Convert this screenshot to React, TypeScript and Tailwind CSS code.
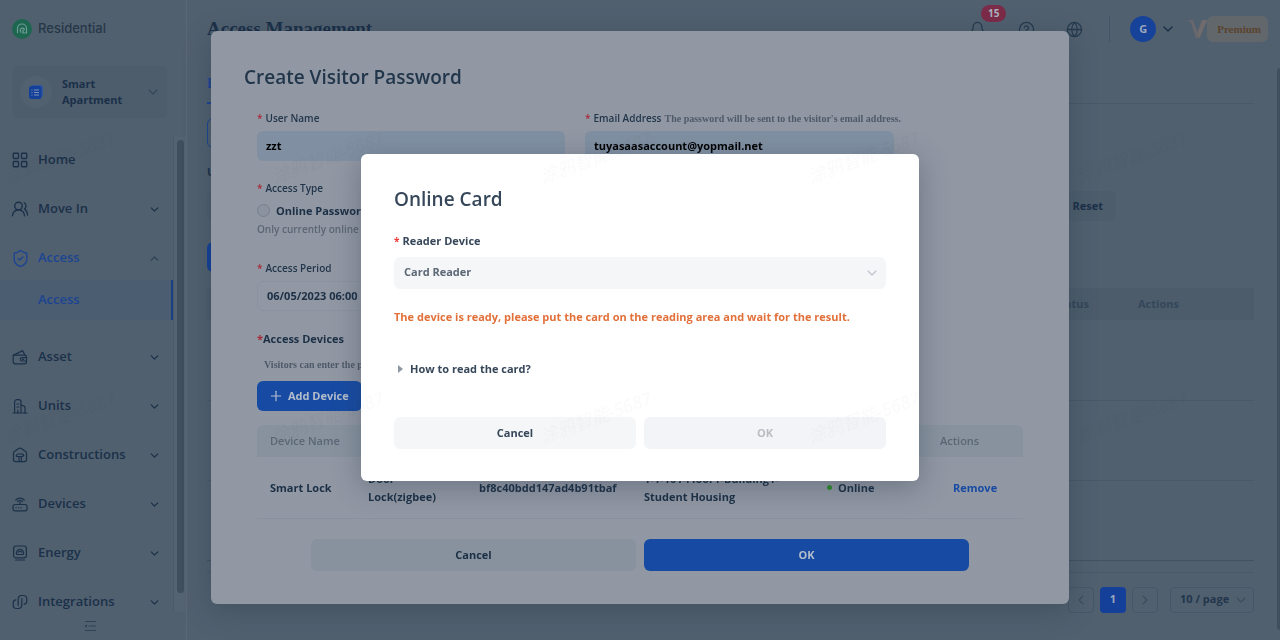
import React from 'react';
import {
    Bell,
    CircleQuestionMark,
    ChevronDown,
    ChevronLeft,
    ChevronRight,
    ChevronUp,
    Globe,
    LayoutGrid,
    Plus,
    ShieldCheck,
    UsersRound,
} from 'lucide-react';

const WalletIcon = () => (
    <svg width="16" height="16" viewBox="0 0 16 16" fill="none" stroke="currentColor" strokeWidth="1.2" strokeLinejoin="round">
        <path d="M1.2 6.2h11.3a2 2 0 0 1 2 2v4.6a2 2 0 0 1-2 2H3.2a2 2 0 0 1-2-2z" />
        <path d="M1.2 6.4 10.6 1.6 13 6.2" />
        <path d="M14.5 8.6H10a1.7 1.7 0 0 0 0 3.4h4.5" />
        <path d="M10 10.3h2" />
    </svg>
);

const UnitsIcon = () => (
    <svg width="16" height="16" viewBox="0 0 16 16" fill="none" stroke="currentColor" strokeWidth="1.2" strokeLinecap="round">
        <path d="M1 15h14M2.6 15V4a2.4 2.4 0 0 1 2.4-2.4h1.6A2.4 2.4 0 0 1 9 4v11" />
        <path d="M9 7l2.6.8a1.8 1.8 0 0 1 1.4 1.8V15M4.9 6h2M4.9 9h2M5.8 12v3" />
    </svg>
);

const ConstructionsIcon = () => (
    <svg width="16" height="16" viewBox="0 0 16 16" fill="none" stroke="currentColor" strokeWidth="1.2" strokeLinejoin="round">
        <path d="M6.7 1.6 2.4 4.5a2 2 0 0 0-.9 1.7v6.4a2 2 0 0 0 2 2h9a2 2 0 0 0 2-2V6.2a2 2 0 0 0-.9-1.7L9.3 1.6a2.3 2.3 0 0 0-2.6 0z" />
        <path d="M4.3 9.8V9a2 2 0 0 1 2-2h4.2l1.3 1.2-1.3 1.3H4.3M7 9.5v5M9.3 9.5v5" />
    </svg>
);

const DevicesIcon = () => (
    <svg width="16" height="16" viewBox="0 0 16 16" fill="none" stroke="currentColor" strokeWidth="1.2" strokeLinecap="round">
        <rect x="1" y="8.5" width="14" height="6.3" rx="2" />
        <path d="M8 8.5V5.8M3.8 4a5.6 5.6 0 0 1 8.4 0M5.7 5.5a3.2 3.2 0 0 1 4.6 0M4 11.7h.1M6.5 11.7h.1M9 11.7h.1" />
    </svg>
);

const EnergyIcon = () => (
    <svg width="16" height="16" viewBox="0 0 16 16" fill="none" stroke="currentColor" strokeWidth="1.2" strokeLinecap="round">
        <rect x="1.6" y="1" width="12.8" height="11.8" rx="2.4" />
        <path d="M4.7 9.5h6.6a3.6 3.6 0 1 0-6.6 0zM6.3 7.2a2 2 0 0 1 3.4 0M3.5 15h9" />
    </svg>
);

const IntegrationsIcon = () => (
    <svg width="16" height="16" viewBox="0 0 16 16" fill="none" stroke="currentColor" strokeWidth="1.2" strokeLinecap="round">
        <path d="M9.8 4.5v6.7a3.2 3.2 0 0 1-3.2 3.3H4.2a3 3 0 0 1-3-3V8.8a3 3 0 0 1 2.6-3" />
        <path d="M6.2 11.5V4.8a3.2 3.2 0 0 1 3.2-3.3h2.4a3 3 0 0 1 3 3v2.7a3 3 0 0 1-2.6 3" />
    </svg>
);

const CollapseIcon = () => (
    <svg width="13" height="12" viewBox="0 0 13 12" fill="none" stroke="currentColor" strokeWidth="1">
        <path d="M1 1.5h11M4.5 6H12M1 10.5h11" />
        <path d="M0.5 6 3 4.2v3.6z" fill="currentColor" stroke="none" />
    </svg>
);

interface MenuItem {
    label: string;
    icon: React.ReactNode;
    expandable?: boolean;
}

const TOP_ITEMS: MenuItem[] = [
    { label: 'Home', icon: <LayoutGrid size={18} strokeWidth={1.8} className="shrink-0" /> },
    { label: 'Move In', icon: <UsersRound size={18} strokeWidth={1.8} className="shrink-0" />, expandable: true },
];

const BOTTOM_ITEMS: MenuItem[] = [
    { label: 'Asset', icon: <WalletIcon />, expandable: true },
    { label: 'Units', icon: <UnitsIcon />, expandable: true },
    { label: 'Constructions', icon: <ConstructionsIcon />, expandable: true },
    { label: 'Devices', icon: <DevicesIcon />, expandable: true },
    { label: 'Energy', icon: <EnergyIcon />, expandable: true },
    { label: 'Integrations', icon: <IntegrationsIcon />, expandable: true },
];

const MenuRow: React.FC<{ item: MenuItem }> = ({ item }) => (
    <li>
        <a href="#" className="flex h-10 items-center gap-[10px] pl-3 pr-3 text-[13px] font-semibold text-[#1b3049]">
            <span className="flex w-4 items-center justify-center">{item.icon}</span>
            <span className="flex-1">{item.label}</span>
            {item.expandable && <ChevronDown size={13} strokeWidth={2.2} />}
        </a>
    </li>
);

const Sidebar = () => (
    <aside className="flex w-[187px] shrink-0 flex-col border-r border-[#5a6876]">
        <div className="flex h-[58px] shrink-0 items-center gap-[6px] pl-3">
            <svg width="20" height="20" viewBox="0 0 20 20" fill="none">
                <circle cx="10" cy="10" r="10" fill="#1d6650" />
                <path d="M5.5 14V9.3A4.5 4.5 0 0 1 10 5a4.5 4.5 0 0 1 4.5 4.5V14H11v-3" stroke="#6f9c94" strokeWidth="1.2" />
                <path d="M9.5 13.5A2.3 2.3 0 1 1 12.3 10c0 .9-.5 1.5-1.3 1.5" stroke="#6f9c94" strokeWidth="1.2" />
            </svg>
            <span className="font-['Inter',sans-serif] text-[13px] font-medium text-[#263747]">Residential</span>
        </div>
        <button className="ml-3 mr-[19px] mt-2 flex h-[52px] shrink-0 items-center rounded-md bg-[#4d5d6c] pl-2 pr-[6px] text-left text-[11px] font-bold leading-4 text-[#1b3049]">
            <span className="flex size-8 items-center justify-center rounded-full bg-[#52616f]">
                <svg width="14" height="14" viewBox="0 0 14 14">
                    <rect x="2" y="0" width="12" height="12" rx="2.5" fill="#2f56a0" />
                    <rect x="0" y="1" width="12.5" height="13" rx="2.5" fill="#15409a" />
                    <path d="M2.5 5h1M5 5h5M2.5 7.5h1M5 7.5h5M2.5 10h1M5 10h5" stroke="#7f93b8" strokeWidth="1.2" />
                </svg>
            </span>
            <span className="ml-[10px] flex-1">
                Smart
                <br />
                Apartment
            </span>
            <ChevronDown size={16} strokeWidth={1.6} className="text-[#33475a]" />
        </button>
        <div className="mt-[19px] flex min-h-0 flex-1 overflow-hidden">
            <nav className="flex-1">
                <ul className="flex flex-col gap-[9px] pt-[3px]">
                    {TOP_ITEMS.map((item) => (
                        <MenuRow key={item.label} item={item} />
                    ))}
                    <li>
                        <a href="#" className="flex h-10 items-center gap-[10px] pl-3 pr-3 text-[13px] font-semibold text-[#1c4493]">
                            <span className="flex w-4 items-center justify-center">
                                <ShieldCheck size={19} strokeWidth={1.7} className="shrink-0" />
                            </span>
                            <span className="flex-1">Access</span>
                            <ChevronUp size={13} strokeWidth={2.2} className="text-[#2c4054]" />
                        </a>
                        <a href="#" className="mb-2 mt-[2px] flex h-10 items-center border-r-2 border-[#1a3f82] bg-[#4b5d71] pl-[38px] text-[13px] font-semibold text-[#1c4493]">
                            Access
                        </a>
                    </li>
                    {BOTTOM_ITEMS.map((item) => (
                        <MenuRow key={item.label} item={item} />
                    ))}
                </ul>
            </nav>
            <div className="w-[13px] border-l border-[#4b5a69] bg-[#546371] pl-[3px] pt-[3px]">
                <div className="h-[453px] w-[7px] rounded-full bg-[#3f4f5e]" />
            </div>
        </div>
        <div className="flex h-7 shrink-0 items-center justify-center pr-1.5">
            <button aria-label="Collapse menu" className="text-[#2f4254]">
                <CollapseIcon />
            </button>
        </div>
    </aside>
);

const Header = () => (
    <header className="flex h-[58px] shrink-0 items-center pl-5 pr-3">
        <h1 className="flex-1 font-['Liberation_Serif',serif] text-[19px] font-bold text-[#1b3049]">Access Management</h1>
        <div className="flex items-center text-[#263a4f]">
            <button aria-label="Notifications" className="relative flex w-[49px] justify-center">
                <Bell size={17} strokeWidth={1.8} />
                <span className="absolute -top-4 left-7 flex h-[17px] w-[25px] items-center justify-center rounded-full bg-[#7c2b48] text-[10px] font-bold text-[#adb4bd]">
                    15
                </span>
            </button>
            <button aria-label="Help" className="flex w-12 justify-center">
                <CircleQuestionMark size={17} strokeWidth={1.8} />
            </button>
            <button aria-label="Language" className="flex w-[49px] justify-center">
                <Globe size={17} strokeWidth={1.8} />
            </button>
        </div>
        <span className="ml-[10px] h-[26px] w-px bg-[#435465]" />
        <button className="ml-5 flex items-center gap-1 text-[#1b3049]">
            <span className="flex size-[26px] items-center justify-center rounded-full bg-[#174299] text-[11px] font-bold text-[#9aa8bd]">G</span>
            <ChevronDown size={16} strokeWidth={2.2} />
        </button>
        <div className="ml-3 flex items-center">
            <svg width="20" height="20" viewBox="0 0 20 20">
                <path d="M0 1h5l4.5 12L14 1h5l-7.5 18H8L3 4z" fill="#67676d" />
                <path d="M13.5 3 14 1h5l-7.5 18-2-5z" fill="#706c6d" />
            </svg>
            <span className="-ml-[1px] flex h-[26px] items-center rounded-md bg-[#62676b] pl-[10px] pr-[7px] font-['Liberation_Serif',serif] text-[11px] font-bold text-[#5a432f]">
                Premium
            </span>
        </div>
    </header>
);

const AccessPage = () => (
    <main className="min-h-0 flex-1 overflow-hidden pl-5 pr-[26px] text-[11px] font-bold text-[#1b3049]">
        <div className="flex h-[46px] items-center border-b border-[#495968] font-['Liberation_Serif',serif] text-sm font-bold text-[#1c4493]">
            <button className="h-[46px] border-b-2 border-[#1c4493] pt-2">Password</button>
        </div>
        <button className="mt-[14px] block h-[30px] rounded-md border border-[#1c4493] px-4 text-[#1c4493]">Visitor</button>
        <label htmlFor="search-user" className="mt-3 flex h-6 items-center">
            User Name
        </label>
        <div className="mt-[7px] flex justify-between pr-[138px]">
            <input id="search-user" className="h-[30px] w-60 rounded-md bg-[#4d5d6c] px-3" />
            <button className="h-[30px] rounded-md bg-[#4d5d6c] px-[13px]">Reset</button>
        </div>
        <button className="mt-[21px] block h-[30px] rounded-md bg-[#15409a] px-4 text-[#9aa8bd]">Add</button>
        <table className="mt-4 w-full table-fixed text-left">
            <colgroup>
                <col />
                <col className="w-[88px]" />
                <col className="w-[128px]" />
            </colgroup>
            <thead>
                <tr className="h-8 bg-[#4c5c6b] text-[#34475a]">
                    <th className="pl-[13px]">User</th>
                    <th className="pl-4">Status</th>
                    <th className="pl-3">Actions</th>
                </tr>
            </thead>
            <tbody>
                <tr className="h-20 border-b border-[#495968]"><td colSpan={3} /></tr>
                <tr className="h-20 border-b border-[#495968]"><td colSpan={3} /></tr>
                <tr className="h-20 border-b border-[#42535f]"><td colSpan={3} /></tr>
            </tbody>
        </table>
        <div className="h-3 border-b border-[#495968]" />
        <div className="mt-[14px] flex h-[26px] items-center justify-end gap-[6px]">
            <span className="mr-[11px]">Total 5 items</span>
            <button aria-label="Previous page" className="flex size-[26px] items-center justify-center rounded-sm border border-[#465767] text-[#3b4d5e]">
                <ChevronLeft size={16} strokeWidth={1.6} />
            </button>
            <button className="size-[26px] rounded-sm bg-[#15409a] text-[#9aa8bd]">1</button>
            <button aria-label="Next page" className="flex size-[26px] items-center justify-center rounded-sm border border-[#465767] text-[#3b4d5e]">
                <ChevronRight size={16} strokeWidth={1.6} />
            </button>
            <div className="relative ml-[6px]">
                <select aria-label="Page size" className="h-[26px] w-[84px] appearance-none rounded-sm border border-[#465767] pl-[9px] text-[#22364b]">
                    <option>10 / page</option>
                </select>
                <ChevronDown size={16} strokeWidth={1.6} className="pointer-events-none absolute right-[5px] top-[5px] text-[#3b4d5e]" />
            </div>
        </div>
    </main>
);

interface FieldLabelProps {
    htmlFor: string;
    children: React.ReactNode;
}

const FieldLabel: React.FC<FieldLabelProps> = ({ htmlFor, children }) => (
    <label htmlFor={htmlFor} className="flex h-6 items-center gap-[3px] whitespace-nowrap text-[10px] font-semibold text-[#22364b]">
        <span className="text-[#a52a3a]">*</span>
        {children}
    </label>
);

const VisitorPasswordDialog = () => (
    <div className="fixed inset-0 flex items-center justify-center pb-[5px]">
        <div role="dialog" aria-label="Create Visitor Password" className="w-[858px] max-w-full rounded-md bg-[#9197a3] px-[33px] pb-[33px] pt-8 text-[11px] font-bold text-[#1b2f45] shadow-[0_6px_28px_rgba(30,45,60,0.3)]">
            <h2 className="text-[19px] font-semibold leading-7 text-[#22364b]">Create Visitor Password</h2>
            <div className="mt-4 px-[13px]">
                <div className="flex gap-5">
                    <div className="w-[308px]">
                        <FieldLabel htmlFor="user-name">User Name</FieldLabel>
                        <input id="user-name" defaultValue="zzt" className="h-[30px] w-full rounded-md bg-[#8090a2] px-[9px] text-black" />
                    </div>
                    <div className="w-[309px]">
                        <FieldLabel htmlFor="email">
                            Email Address
                            <span className="font-['Liberation_Serif',serif] font-bold text-[#4e5a69]">
                                The password will be sent to the visitor's email address.
                            </span>
                        </FieldLabel>
                        <input id="email" defaultValue="tuyasaasaccount@yopmail.net" className="h-[30px] w-full rounded-md bg-[#8090a2] px-[9px] text-black" />
                    </div>
                </div>
                <div className="mt-4">
                    <FieldLabel htmlFor="online-password">Access Type</FieldLabel>
                    <label className="flex h-5 items-center gap-[6px]">
                        <input id="online-password" type="radio" className="size-[13px] appearance-none rounded-full border border-[#77818e] bg-[#8b939f]" />
                        Online Password
                    </label>
                    <p className="text-[10px] font-semibold leading-4 text-[#5b6674]">Only currently online devices</p>
                </div>
                <div className="mt-5">
                    <FieldLabel htmlFor="access-period">Access Period</FieldLabel>
                    <input id="access-period" defaultValue="06/05/2023 06:00" className="h-[30px] w-[308px] rounded-md border border-[#8892a0] px-[9px]" />
                </div>
                <h3 className="mt-[18px] leading-5">
                    <span className="text-[#a52a3a]">*</span>Access Devices
                </h3>
                <p className="flex h-8 items-center pl-[7px] font-['Liberation_Serif',serif] text-[10px] font-bold text-[#4e5a69]">
                    Visitors can enter the password
                </p>
                <button className="flex h-[30px] items-center gap-1 rounded-md bg-[#174ba3] pl-[11px] pr-[13px] text-[#b3bdcb]">
                    <Plus size={16} strokeWidth={1.8} />
                    Add Device
                </button>
                <table className="mt-[14px] w-full table-fixed text-left">
                    <colgroup>
                        <col className="w-[98px]" />
                        <col className="w-[111px]" />
                        <col className="w-[165px]" />
                        <col className="w-[183px]" />
                        <col />
                        <col className="w-[96px]" />
                    </colgroup>
                    <thead>
                        <tr className="h-8 bg-[#88929f] text-[#5b6776]">
                            <th className="rounded-tl-md pl-[13px] font-semibold">Device Name</th>
                            <th className="pl-[13px] font-semibold">Type</th>
                            <th className="pl-[13px] font-semibold">ID</th>
                            <th className="pl-[13px] font-semibold">Location</th>
                            <th className="pl-[13px] font-semibold">Status</th>
                            <th className="rounded-tr-md pl-[13px] font-semibold">Actions</th>
                        </tr>
                    </thead>
                    <tbody>
                        <tr className="h-[62px] border-b border-[#88919e] leading-[18px]">
                            <td className="pl-[13px]">Smart Lock</td>
                            <td className="px-[13px]">Door Lock(zigbee)</td>
                            <td className="pl-[13px]">bf8c40bdd147ad4b91tbaf</td>
                            <td className="pl-[13px]">1-1-101-Floor1-Building1-Student Housing</td>
                            <td className="pl-[13px]">
                                <span className="flex items-center gap-[6px]">
                                    <span className="size-[5px] rounded-full bg-[#2f8a2c]" />
                                    Online
                                </span>
                            </td>
                            <td className="pl-[26px]">
                                <button className="text-[#174ba3]">Remove</button>
                            </td>
                        </tr>
                    </tbody>
                </table>
            </div>
            <div className="mt-5 flex gap-2 px-[67px]">
                <button className="h-8 flex-1 rounded-md bg-[#88929f]">Cancel</button>
                <button className="h-8 flex-1 rounded-md bg-[#174ba3] text-[#b3bdcb]">OK</button>
            </div>
        </div>
    </div>
);

const OnlineCardDialog = () => (
    <div className="fixed inset-0 flex items-center justify-center pb-[5px]">
        <div role="dialog" aria-label="Online Card" className="w-[558px] max-w-full rounded-md bg-white px-[33px] pb-8 pt-[31px] text-[11px] font-bold text-[#36475a] shadow-[0_6px_28px_rgba(40,55,75,0.35)]">
            <h2 className="text-[19px] font-semibold leading-7">Online Card</h2>
            <label htmlFor="reader-device" className="mt-4 flex h-6 items-center gap-[3px]">
                <span className="text-[10px] text-[#ee3b3b]">*</span>
                Reader Device
            </label>
            <div className="relative mt-1">
                <select id="reader-device" className="block h-8 w-full appearance-none rounded-md bg-[#f4f6f8] px-[10px] pb-[2px] text-[#5c6875]">
                    <option>Card Reader</option>
                </select>
                <ChevronDown size={16} strokeWidth={1.6} className="pointer-events-none absolute right-[6px] top-2 text-[#bcc2c9]" />
            </div>
            <p className="mt-4 leading-6 text-[#e2703a]">
                The device is ready, please put the card on the reading area and wait for the result.
            </p>
            <button className="mt-7 flex h-6 items-center gap-[7px] pl-1">
                <svg width="5" height="8" viewBox="0 0 5 8">
                    <path d="M0 0l5 4-5 4z" fill="#8e98a3" />
                </svg>
                How to read the card?
            </button>
            <div className="mt-9 flex gap-2">
                <button className="h-8 flex-1 rounded-md bg-[#f4f6f8]">Cancel</button>
                <button disabled className="h-8 flex-1 rounded-md bg-[#f3f4f8] text-[#b9bdc3]">OK</button>
            </div>
        </div>
    </div>
);

// Tiled account mark laid over the whole window
const Watermark = () => (
    <div aria-hidden="true" className="pointer-events-none fixed inset-0 overflow-hidden">
        <div className="-mx-[74px] mt-[27px] grid grid-cols-[repeat(5,268px)]">
            {Array.from({ length: 10 }, (_, i) => (
                <div key={i} className="flex h-[260px] items-center justify-center">
                    <span className="-rotate-20 whitespace-nowrap font-['Noto_Sans','Noto_Sans_CJK_SC',sans-serif] text-lg font-medium italic text-black/[0.02]">
                        涂鸦智能-5687
                    </span>
                </div>
            ))}
        </div>
    </div>
);

export default function App() {
    return (
        <div className="flex h-screen overflow-hidden bg-[#51606f] font-['Open_Sans',sans-serif]">
            <Sidebar />
            <div className="flex min-w-0 flex-1 flex-col">
                <Header />
                <div className="flex min-h-0 flex-1">
                    <AccessPage />
                </div>
            </div>
            <div className="fixed bottom-[10px] right-0 top-[68px] w-[3px] rounded-l-full bg-[#3f4f5e]" />
            <VisitorPasswordDialog />
            <OnlineCardDialog />
            <Watermark />
        </div>
    );
}
